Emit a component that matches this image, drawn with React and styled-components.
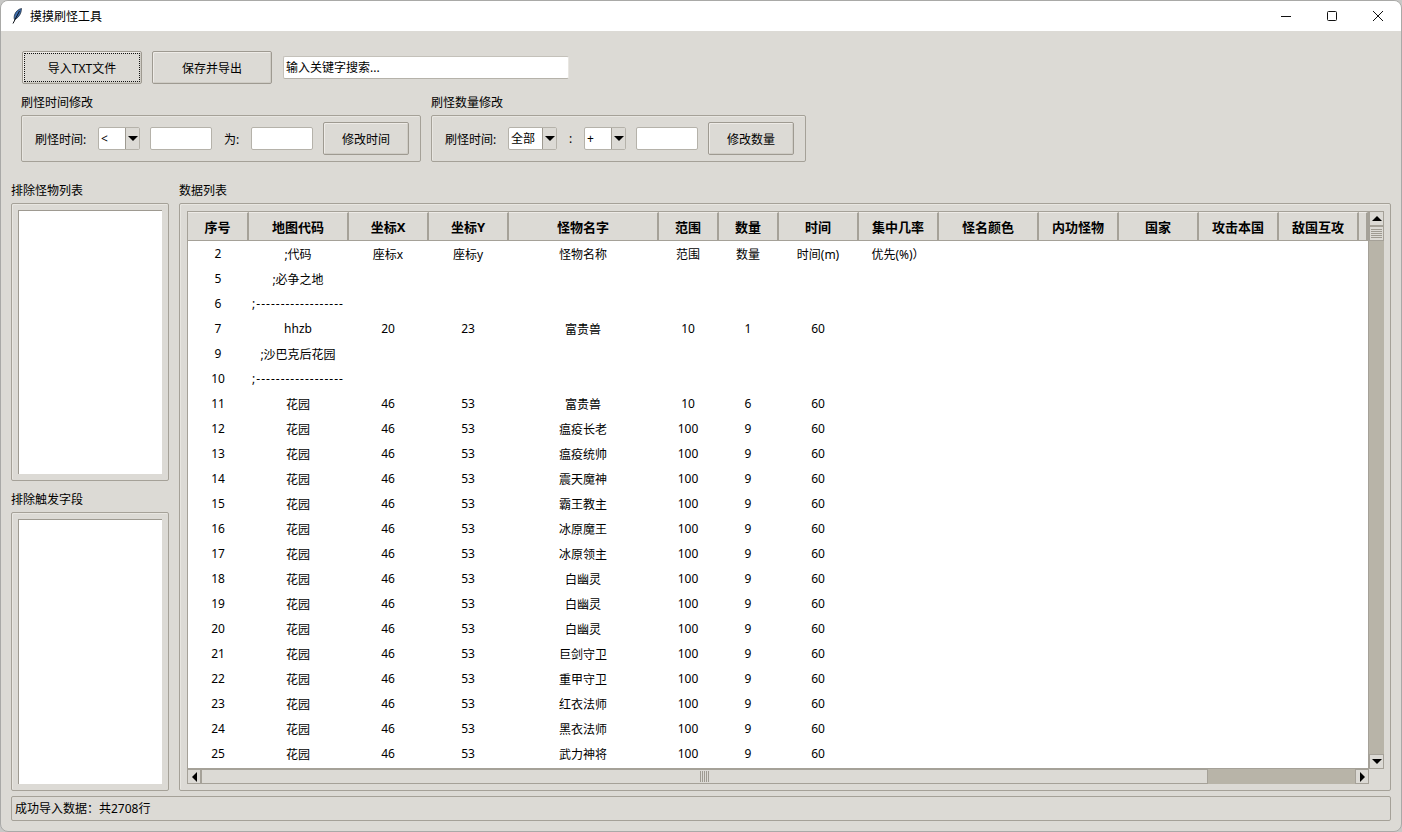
import React from "react";
import styled, { createGlobalStyle } from "styled-components";

const GlobalStyle = createGlobalStyle`
  html, body {
    margin: 0;
    padding: 0;
    background: #c8c8c6;
  }
  body {
    font-family: "Noto Sans", "Noto Sans CJK SC", sans-serif;
    font-size: 12px;
    color: #000;
  }
`;

const HEADER_COLUMNS = "61px 100px 80px 80px 150px 60px 60px 80px 80px 100px 80px 80px 80px 80px 9px";
const COLUMNS = "60px 100px 80px 80px 150px 60px 60px 80px 80px 100px 80px 80px 80px 80px 10px";

const HEADERS = ["序号", "地图代码", "坐标X", "坐标Y", "怪物名字", "范围", "数量", "时间", "集中几率", "怪名颜色", "内功怪物", "国家", "攻击本国", "敌国互攻", ""];

const MONSTERS = [
  [11, "富贵兽", 10, 6],
  [12, "瘟疫长老"],
  [13, "瘟疫统帅"],
  [14, "震天魔神"],
  [15, "霸王教主"],
  [16, "冰原魔王"],
  [17, "冰原领主"],
  [18, "白幽灵"],
  [19, "白幽灵"],
  [20, "白幽灵"],
  [21, "巨剑守卫"],
  [22, "重甲守卫"],
  [23, "红衣法师"],
  [24, "黑衣法师"],
  [25, "武力神将"],
];

const ROWS = [
  [2, ";代码", "座标x", "座标y", "怪物名称", "范围", "数量", "时间(m)", "优先(%)）"],
  [5, ";必争之地"],
  [6, ";------------------"],
  [7, "hhzb", 20, 23, "富贵兽", 10, 1, 60],
  [9, ";沙巴克后花园"],
  [10, ";------------------"],
  ...MONSTERS.map(([id, name, range = 100, count = 9]) => [id, "花园", 46, 53, name, range, count, 60]),
];

function Feather() {
  return (
    <svg width="10" height="16" viewBox="0 0 10 16">
      <path d="M9.500 0.500C6.500 1 3.500 3.500 2.500 7C2 9 2 10.500 2.500 11.500C5.500 10.500 8 7.500 9 4Z" fill="#3f6fb0" stroke="#14202e" strokeWidth="0.7" />
      <path d="M7.500 3L1 15.500" stroke="#0b1016" strokeWidth="1" fill="none" />
    </svg>
  );
}

function WindowButtons() {
  return (
    <Controls>
      <ControlButton>
        <svg width="12" height="12" viewBox="0 0 12 12">
          <path d="M1 6.500H11" stroke="#111" strokeWidth="1" />
        </svg>
      </ControlButton>
      <ControlButton>
        <svg width="12" height="12" viewBox="0 0 12 12">
          <rect x="1.500" y="1.500" width="9" height="9" rx="1" fill="none" stroke="#111" strokeWidth="1" />
        </svg>
      </ControlButton>
      <ControlButton>
        <svg width="12" height="12" viewBox="0 0 12 12">
          <path d="M1 1L11 11M11 1L1 11" stroke="#111" strokeWidth="1" />
        </svg>
      </ControlButton>
    </Controls>
  );
}

function Combo({ value, width }) {
  return (
    <ComboBox $width={width}>
      <ComboValue>{value}</ComboValue>
      <ComboArrow>
        <Triangle $dir="down" />
      </ComboArrow>
    </ComboBox>
  );
}

export default function App() {
  return (
    <Window>
      <GlobalStyle />
      <TitleBar>
        <Feather />
        <TitleText>摸摸刷怪工具</TitleText>
        <WindowButtons />
      </TitleBar>
      <Body>
        <Toolbar>
          <Button $width={120} $focus>导入TXT文件</Button>
          <Button $width={120}>保存并导出</Button>
          <SearchInput>输入关键字搜索...</SearchInput>
        </Toolbar>

        <EditRow>
          <div>
            <GroupLabel>刷怪时间修改</GroupLabel>
            <EditBox $width={400}>
              <FieldLabel $width={63}>刷怪时间:</FieldLabel>
              <Combo value="<" width={42} />
              <Entry $ml={10} />
              <FieldLabel $width={39} $center>为:</FieldLabel>
              <Entry />
              <Button $width={86} $ml={10}>修改时间</Button>
            </EditBox>
          </div>
          <div>
            <GroupLabel>刷怪数量修改</GroupLabel>
            <EditBox $width={375}>
              <FieldLabel $width={63}>刷怪时间:</FieldLabel>
              <Combo value="全部" width={49} />
              <FieldLabel $width={27} $center>:</FieldLabel>
              <Combo value="+" width={42} />
              <Entry $ml={10} />
              <Button $width={86} $ml={10}>修改数量</Button>
            </EditBox>
          </div>
        </EditRow>

        <MainArea>
          <SideColumn>
            <GroupLabel>排除怪物列表</GroupLabel>
            <ListFrame $height={278}>
              <ListBox />
            </ListFrame>
            <GroupLabel $top={11}>排除触发字段</GroupLabel>
            <ListFrame $height={279}>
              <ListBox />
            </ListFrame>
          </SideColumn>

          <DataColumn>
            <GroupLabel>数据列表</GroupLabel>
            <DataFrame>
              <TreeGrid>
                <Tree>
                  <HeaderRow>
                    {HEADERS.map((h, i) => (
                      <HeaderCell key={i}>{h}</HeaderCell>
                    ))}
                  </HeaderRow>
                  {ROWS.map((row) => (
                    <DataRow key={row[0]}>
                      {row.map((v, i) => (
                        <DataCell key={i} $rule={String(v).startsWith(";-")}>{v}</DataCell>
                      ))}
                    </DataRow>
                  ))}
                </Tree>
                <VScroll>
                  <ArrowButton $h={15}>
                    <Triangle $dir="up" />
                  </ArrowButton>
                  <VThumb>
                    <Grip $vertical />
                  </VThumb>
                  <VTrough />
                  <ArrowButton $h={15}>
                    <Triangle $dir="down" />
                  </ArrowButton>
                </VScroll>
                <HScroll>
                  <ArrowButton $w={14}>
                    <Triangle $dir="left" />
                  </ArrowButton>
                  <HThumb>
                    <Grip />
                  </HThumb>
                  <HTrough />
                  <ArrowButton $w={14}>
                    <Triangle $dir="right" />
                  </ArrowButton>
                </HScroll>
              </TreeGrid>
            </DataFrame>
          </DataColumn>
        </MainArea>

        <StatusBar>成功导入数据：共2708行</StatusBar>
      </Body>
    </Window>
  );
}

const Window = styled.div`
  width: 1402px;
  height: 832px;
  display: flex;
  flex-direction: column;
  box-sizing: border-box;
  border: 1px solid #a9a9a7;
  border-radius: 8px;
  overflow: hidden;
  background: #dcdad5;
`;

const TitleBar = styled.div`
  height: 30px;
  flex: none;
  display: flex;
  align-items: center;
  padding-left: 11px;
  background: #fff;
`;

const TitleText = styled.span`
  margin-left: 8px;
`;

const Controls = styled.div`
  margin-left: auto;
  display: flex;
`;

const ControlButton = styled.div`
  width: 46px;
  height: 30px;
  display: flex;
  align-items: center;
  justify-content: center;
`;

const Body = styled.div`
  flex: 1;
  display: flex;
  flex-direction: column;
`;

const Toolbar = styled.div`
  display: flex;
  align-items: center;
  gap: 10px;
  margin-top: 20px;
  padding-left: 21px;
  height: 33px;
`;

const Button = styled.div`
  position: relative;
  box-sizing: border-box;
  flex: none;
  width: ${(p) => p.$width}px;
  height: 33px;
  margin-left: ${(p) => p.$ml || 0}px;
  display: flex;
  align-items: center;
  justify-content: center;
  border: 1px solid #9e9a91;
  border-radius: 2px;
  box-shadow: inset 1px 1px 0 #eeebe7, inset -1px -1px 0 #cfccc5;
  background: #dcdad5;

  ${(p) =>
    p.$focus &&
    `&::after {
      content: "";
      position: absolute;
      inset: 1px;
      border: 1px dotted #111;
    }`}
`;

const SearchInput = styled.div`
  box-sizing: border-box;
  width: 286px;
  height: 23px;
  margin-left: 1px;
  line-height: 21px;
  padding-left: 2px;
  border: 1px solid #9e9a91;
  border-color: #c4c1ba #e8e6e1 #b5b2aa #c4c1ba;
  border-radius: 2px;
  background: #fff;
`;

const EditRow = styled.div`
  display: flex;
  gap: 10px;
  margin-top: 11px;
  padding-left: 20px;
`;

const GroupLabel = styled.div`
  height: 14px;
  line-height: 16px;
  margin-top: ${(p) => p.$top || 0}px;
  margin-bottom: 6px;
  white-space: nowrap;
`;

const EditBox = styled.div`
  box-sizing: border-box;
  width: ${(p) => p.$width}px;
  height: 47px;
  display: flex;
  align-items: center;
  padding-left: 13px;
  border: 1px solid #a5a198;
  border-radius: 2px;
  box-shadow: inset 1px 1px 0 #e8e6e1;
`;

const FieldLabel = styled.span`
  flex: none;
  width: ${(p) => p.$width}px;
  text-align: ${(p) => (p.$center ? "center" : "left")};
`;

const ComboBox = styled.div`
  box-sizing: border-box;
  flex: none;
  width: ${(p) => p.$width}px;
  height: 23px;
  display: flex;
  border: 1px solid #b5b2aa;
  border-radius: 2px;
  background: #fff;
`;

const ComboValue = styled.div`
  flex: 1;
  line-height: 21px;
  padding-left: 2px;
`;

const ComboArrow = styled.div`
  flex: none;
  width: 13px;
  display: flex;
  align-items: center;
  justify-content: center;
  border-left: 1px solid #9e9a91;
  background: #dcdad5;
`;

const Triangle = styled.span`
  width: 0;
  height: 0;
  border-style: solid;
  border-color: transparent;
  ${(p) => p.$dir === "down" && "border-width: 5px 5px 0; border-top-color: #000;"}
  ${(p) => p.$dir === "up" && "border-width: 0 5px 5px; border-bottom-color: #000;"}
  ${(p) => p.$dir === "left" && "border-width: 5px 5px 5px 0; border-right-color: #000;"}
  ${(p) => p.$dir === "right" && "border-width: 5px 0 5px 5px; border-left-color: #000;"}
`;

const Entry = styled.div`
  box-sizing: border-box;
  flex: none;
  width: 62px;
  height: 23px;
  margin-left: ${(p) => p.$ml || 0}px;
  border: 1px solid #b5b2aa;
  border-radius: 2px;
  background: #fff;
`;

const MainArea = styled.div`
  display: flex;
  gap: 10px;
  margin-top: 21px;
  padding: 0 10px;
`;

const SideColumn = styled.div`
  flex: none;
  width: 158px;
`;

const ListFrame = styled.div`
  box-sizing: border-box;
  height: ${(p) => p.$height}px;
  padding: 6px;
  border: 1px solid #a5a198;
  border-radius: 2px;
  box-shadow: inset 1px 1px 0 #e8e6e1;
`;

const ListBox = styled.div`
  height: 100%;
  box-sizing: border-box;
  border-top: 1px solid #9e9a91;
  border-left: 1px solid #9e9a91;
  background: #fff;
`;

const DataColumn = styled.div`
  flex: 1;
  min-width: 0;
`;

const DataFrame = styled.div`
  box-sizing: border-box;
  height: 588px;
  padding: 7px 6px 6px 7px;
  border: 1px solid #a5a198;
  border-radius: 2px;
  box-shadow: inset 1px 1px 0 #e8e6e1;
`;

const TreeGrid = styled.div`
  height: 100%;
  display: grid;
  grid-template-columns: 1fr 15px;
  grid-template-rows: 558px 15px;
  overflow: hidden;
`;

const Tree = styled.div`
  box-sizing: border-box;
  border: 1px solid #a5a198;
  background: #fff;
  overflow: hidden;
`;

const HeaderRow = styled.div`
  display: grid;
  grid-template-columns: ${HEADER_COLUMNS};
  height: 29px;
`;

const HeaderCell = styled.div`
  display: flex;
  align-items: center;
  justify-content: center;
  box-sizing: border-box;
  border-right: 2px solid #a5a198;
  border-bottom: 1px solid #a5a198;
  border-top: 1px solid #eeebe7;
  background: #dcdad5;
  font-size: 13px;
  font-weight: 700;
`;

const DataRow = styled.div`
  display: grid;
  grid-template-columns: ${COLUMNS};
  height: 25px;
`;

const DataCell = styled.div`
  display: flex;
  align-items: center;
  justify-content: center;
  white-space: nowrap;
  letter-spacing: ${(p) => (p.$rule ? "1px" : "normal")};
`;

const VScroll = styled.div`
  display: flex;
  flex-direction: column;
`;

const HScroll = styled.div`
  display: flex;
`;

const ArrowButton = styled.div`
  box-sizing: border-box;
  flex: none;
  width: ${(p) => (p.$w ? `${p.$w}px` : "auto")};
  height: ${(p) => (p.$h ? `${p.$h}px` : "auto")};
  display: flex;
  align-items: center;
  justify-content: center;
  border: 1px solid #a5a198;
  background: #dcdad5;
`;

const VThumb = styled.div`
  box-sizing: border-box;
  height: 15px;
  flex: none;
  display: flex;
  align-items: center;
  justify-content: center;
  border: 1px solid #a5a198;
  background: #dcdad5;
`;

const VTrough = styled.div`
  flex: 1;
  background: #b8b4a8;
`;

const HThumb = styled.div`
  box-sizing: border-box;
  width: 1007px;
  flex: none;
  display: flex;
  align-items: center;
  justify-content: center;
  border: 1px solid #a5a198;
  background: #dcdad5;
`;

const HTrough = styled.div`
  flex: 1;
  background: #b8b4a8;
`;

const Grip = styled.span`
  display: block;
  width: ${(p) => (p.$vertical ? "11px" : "9px")};
  height: ${(p) => (p.$vertical ? "9px" : "11px")};
  background: repeating-linear-gradient(
    ${(p) => (p.$vertical ? "180deg" : "90deg")},
    #9e9a91 0,
    #9e9a91 1px,
    #dcdad5 1px,
    #dcdad5 2px
  );
`;

const StatusBar = styled.div`
  box-sizing: border-box;
  height: 25px;
  line-height: 23px;
  margin: 5px 10px 0;
  padding-left: 3px;
  border: 1px solid #a5a198;
  border-radius: 2px;
`;
